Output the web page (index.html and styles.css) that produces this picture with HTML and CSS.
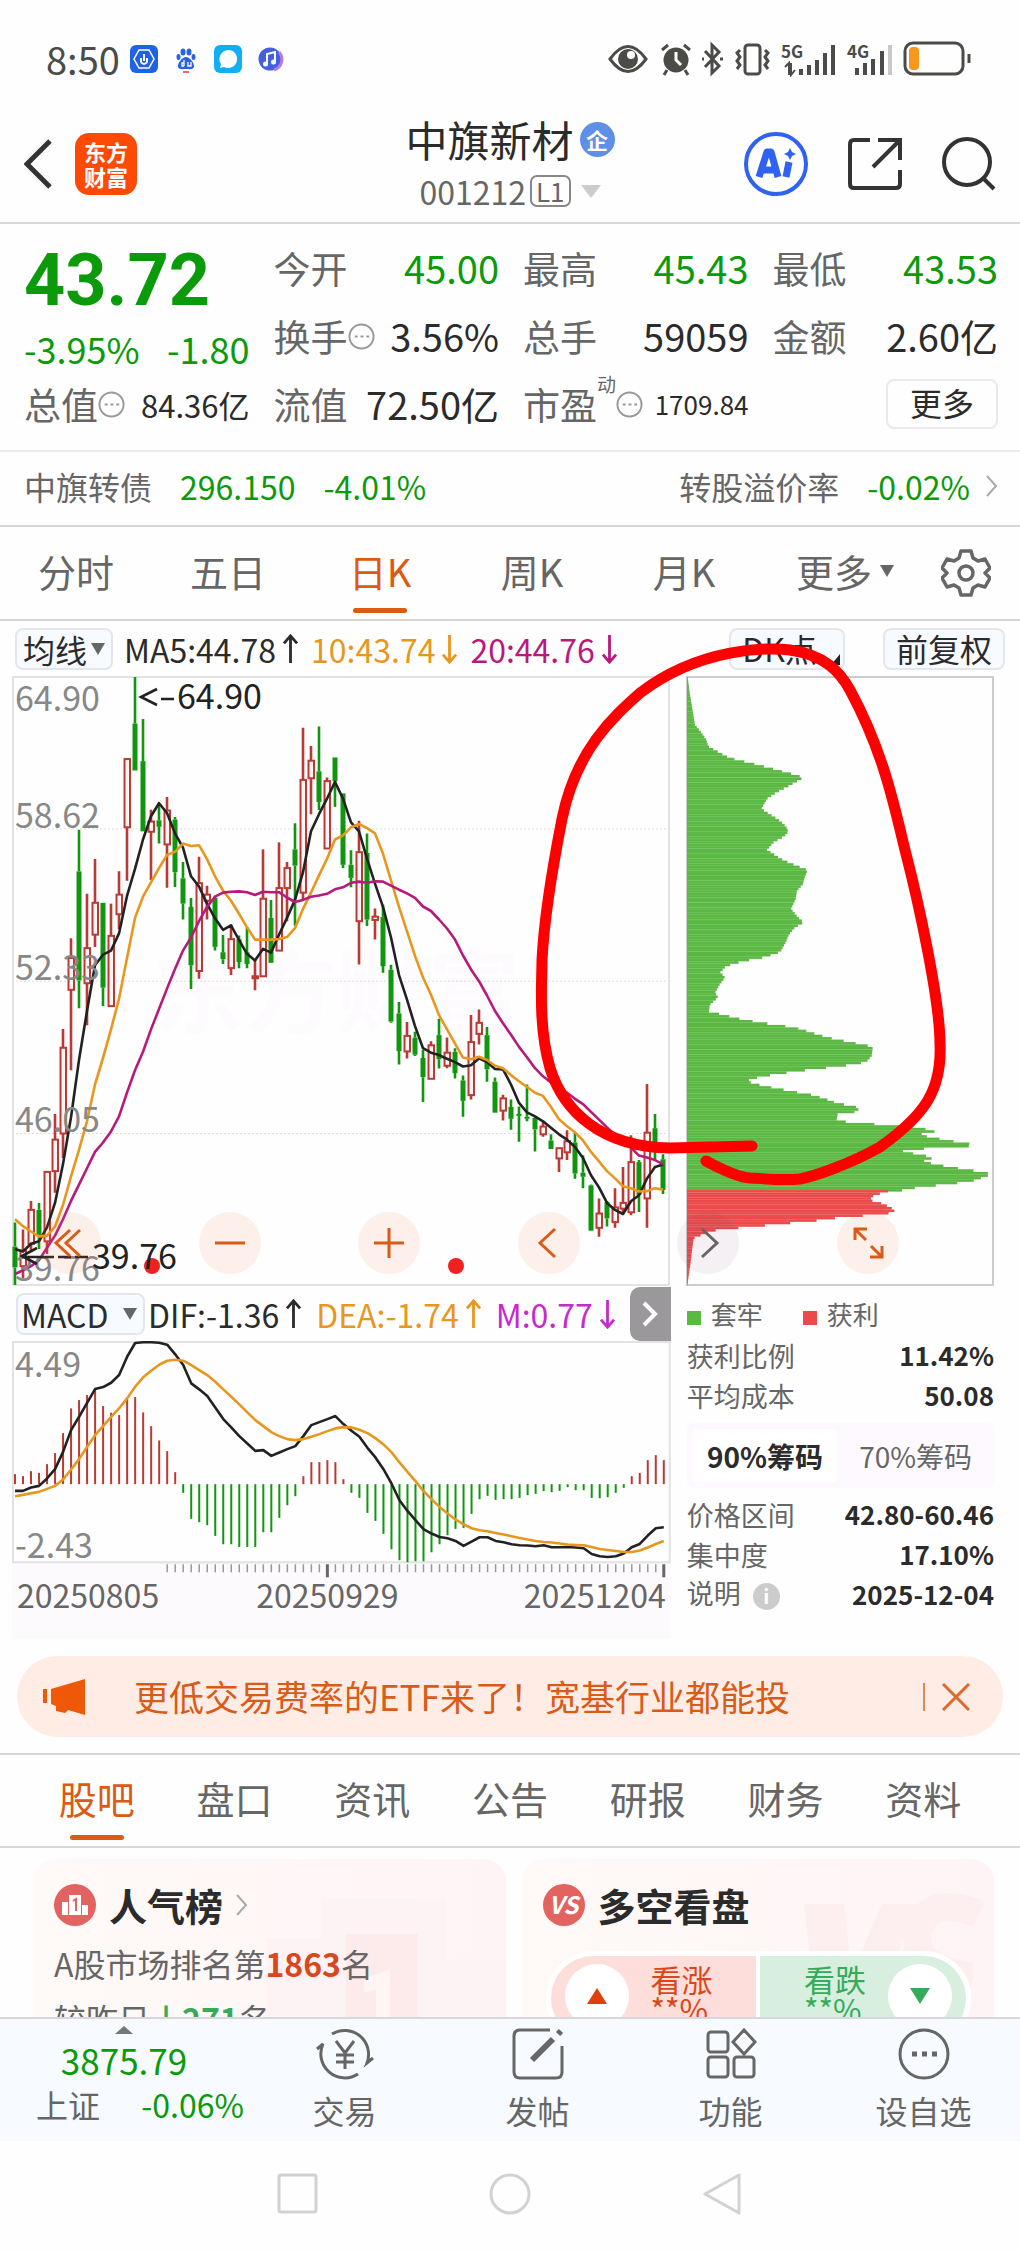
FILE: index.html
```html
<!DOCTYPE html>
<html lang="zh-CN">
<head>
    <meta charset="UTF-8">
    <meta name="viewport" content="width=device-width, initial-scale=1.0">
    <link rel="stylesheet" href="styles.css">
    <title>中旗新材 001212</title>
</head>
<body>
    <div class="status-bar">
        <span class="clock">8:50</span>
        <svg class="app-icon" viewBox="0 0 28 28"><rect width="28" height="28" rx="6" fill="#1f62e6"/><path d="M9 5h10l5 9-5 9H9l-5-9z" fill="none" stroke="#fff" stroke-width="1.5"/><path d="M11 13v4q3 4 6 0v-4M14 9v7" fill="none" stroke="#fff" stroke-width="2"/></svg>
        <svg class="app-icon" viewBox="0 0 28 28" fill="#2a62e0"><ellipse cx="11" cy="7" rx="2.500" ry="3.500"/><ellipse cx="17" cy="7" rx="2.500" ry="3.500"/><ellipse cx="6.500" cy="12" rx="2" ry="3"/><ellipse cx="21.500" cy="12" rx="2" ry="3"/><path d="M14 12c4 0 9 7 8 10-1 3-5 2-8 2s-7 1-8-2c-1-3 4-10 8-10z"/><path d="M12 15v6M12 18h-2v3h2M16 17v4h3v-4" fill="none" stroke="#fff" stroke-width="1.300"/><path d="M11 27h6" stroke="#e33" stroke-width="1.500"/></svg>
        <svg class="app-icon" viewBox="0 0 28 28"><rect width="28" height="28" rx="6" fill="#12aef5"/><path d="M14 5a9 9 0 1 1-4 17l-4 1 1-4a9 9 0 0 1 7-14z" fill="#fff"/></svg>
        <svg class="app-icon" viewBox="0 0 28 28"><circle cx="14" cy="14" r="11.500" fill="#4560dc"/><path d="M23 7a11 11 0 0 1-5 18" fill="none" stroke="#b77be8" stroke-width="3"/><path d="M11 19V9l8-2v10" fill="none" stroke="#fff" stroke-width="2"/><circle cx="9.500" cy="19" r="2.500" fill="#fff"/><circle cx="17.500" cy="17" r="2.500" fill="#fff"/></svg>
        <svg class="sys-icons" viewBox="0 0 364 36" fill="none" stroke="#4b4c48" stroke-width="3">
            <path d="M2 18Q20-7 38 18Q20 43 2 18z"/><circle cx="20" cy="18" r="10" fill="#4b4c48" stroke="none"/><circle cx="23" cy="14" r="4" fill="#fff" stroke="none"/>
            <circle cx="68" cy="19" r="12.500" fill="#4b4c48" stroke="none"/><path d="M54 9l6-5M82 9l-6-5M59 29l-3 5M77 29l3 5"/><path d="M68 11v8l5 5" stroke="#fff"/>
            <path d="M97 10l14 15-7 7V4l7 7-14 15M94 18h2M112 18h3"/>
            <rect x="137" y="4" width="15" height="29" rx="3"/><path d="M132 9l-3 3 3 4-3 4 3 4-3 4M157 9l3 3-3 4 3 4-3 4 3 4"/>
            <path d="M177 26l4-4v12M183 22v12l4-5" stroke-width="2"/>
            <path d="M193 28v6M201 24v10M209 19v15M217 12v22M225 4v30M249 27v7M257 22v12M265 18v16M274 10v24" stroke-width="4"/><path d="M282 4v30" stroke="#c9c9c9" stroke-width="4"/>
            <rect x="297" y="2" width="58" height="31" rx="8"/><rect x="301" y="6" width="10" height="23" rx="4" fill="#f9961e" stroke="none"/><path d="M361 13v9"/>
            <text x="173" y="17">5G</text><text x="239" y="17">4G</text>
        </svg>
    </div>

    <header class="header">
        <div class="header-left">
            <button class="icon-button" aria-label="返回"><svg width="28" height="50" viewBox="0 0 28 50"><path d="M26 2L3 25l23 23" fill="none" stroke="#333" stroke-width="5"/></svg></button>
            <a class="logo" href="#"><span>东方</span><span>财富</span></a>
        </div>
        <div class="stock-title">
            <h1>中旗新材<span class="badge">企</span></h1>
            <p class="code">001212<span class="level">L1</span><i class="triangle"></i></p>
        </div>
        <div class="header-right">
            <button class="icon-button" aria-label="Ai"><svg width="64" height="64" viewBox="0 0 64 64" fill="none" stroke="#2f62f0"><circle cx="32" cy="32" r="30" stroke-width="4"/><path d="M15 45l8-25h4l7 25M18 38h13" stroke-width="7" stroke-linejoin="round"/><path d="M45 30l-3 15" stroke-width="7"/><path d="M46 16l2 4 4 2-4 2-2 4-2-4-4-2 4-2z" fill="#2f62f0" stroke="none"/></svg></button>
            <button class="icon-button" aria-label="分享"><svg width="54" height="54" viewBox="0 0 54 54" fill="none" stroke="#333" stroke-width="4"><path d="M22 3H6Q2 3 2 7v40q0 4 4 4h42q4 0 4-4V33M30 3h22v20M51 4L25 30"/></svg></button>
            <button class="icon-button" aria-label="搜索"><svg width="54" height="54" viewBox="0 0 54 54" fill="none" stroke="#333" stroke-width="4"><circle cx="25" cy="25" r="23"/><path d="M41 41l11 11"/></svg></button>
        </div>
    </header>

    <section class="quote">
        <div class="price-box">
            <strong class="price">43.72</strong>
            <div class="change"><span>-3.95%</span><span>-1.80</span></div>
        </div>
        <div class="cell"><span>今开</span><b class="down">45.00</b></div>
        <div class="cell"><span>最高</span><b class="down">45.43</b></div>
        <div class="cell"><span>最低</span><b class="down">43.53</b></div>
        <div class="cell"><span>换手<svg class="dots" viewBox="0 0 28 28"><circle cx="14" cy="14" r="12.500"/><path d="M7 14h3M13 14h3M19 14h3"/></svg></span><b>3.56%</b></div>
        <div class="cell"><span>总手</span><b>59059</b></div>
        <div class="cell"><span>金额</span><b>2.60亿</b></div>
        <div class="cell"><span>总值<svg class="dots" viewBox="0 0 28 28"><circle cx="14" cy="14" r="12.500"/><path d="M7 14h3M13 14h3M19 14h3"/></svg></span><b class="mid">84.36亿</b></div>
        <div class="cell"><span>流值</span><b>72.50亿</b></div>
        <div class="cell"><span>市盈<sup>动</sup><svg class="dots" viewBox="0 0 28 28"><circle cx="14" cy="14" r="12.500"/><path d="M7 14h3M13 14h3M19 14h3"/></svg></span><b class="small">1709.84</b></div>
        <div class="cell cell-end"><button class="more">更多</button></div>
    </section>

    <a class="bond" href="#">
        <span>中旗转债</span><span class="down">296.150</span><span class="down">-4.01%</span>
        <span class="bond-rate">转股溢价率</span><span class="down">-0.02%</span>
        <svg width="12" height="24" viewBox="0 0 12 24"><path d="M1 2l9 10-9 10" fill="none" stroke="#aaa" stroke-width="2"/></svg>
    </a>

    <nav class="period-tabs">
        <a href="#">分时</a>
        <a href="#">五日</a>
        <a href="#" class="active">日K</a>
        <a href="#">周K</a>
        <a href="#">月K</a>
        <a href="#" class="tab-more">更多<i class="caret"></i></a>
        <button class="icon-button" aria-label="设置"><svg width="50" height="50" viewBox="0 0 50 50" fill="none" stroke="#666" stroke-width="3.500" stroke-linejoin="round"><path d="M20 3h10l2 7 5 3 7-2 5 9-5 5 0 0 5 5-5 9-7-2-5 3-2 7H20l-2-7-5-3-7 2-5-9 5-5-5-5 5-9 7 2 5-3z"/><circle cx="25" cy="25" r="7"/></svg></button>
    </nav>

    <main class="chart-area">
        <div class="toolbar">
            <label class="picker"><select aria-label="均线"><option>均线</option></select><i class="caret"></i></label>
            <div class="readings">
                <span>MA5:44.78<svg class="arrow" viewBox="0 0 18 32"><path d="M9 31V2M2 10l7-8 7 8"/></svg></span>
                <span class="orange">10:43.74<svg class="arrow" viewBox="0 0 18 32"><path d="M9 1v29M2 22l7 8 7-8"/></svg></span>
                <span class="magenta">20:44.76<svg class="arrow" viewBox="0 0 18 32"><path d="M9 1v29M2 22l7 8 7-8"/></svg></span>
            </div>
            <button class="chip-button dk">DK点</button>
            <button class="chip-button">前复权</button>
        </div>

        <div class="charts">
            <svg class="kline" id="kline" viewBox="0 0 658 610">
                <text class="watermark" x="140" y="350">东方财富</text>
            </svg>
            <svg class="chips" id="chips" viewBox="0 0 308 610"></svg>
            <div class="chart-buttons">
                <button aria-label="最早"><svg viewBox="0 0 62 62"><path d="M31 18L17 31l14 13M41 18L27 31l14 13"/></svg></button>
                <button aria-label="缩小"><svg viewBox="0 0 62 62"><path d="M16 31h30"/></svg></button>
                <button aria-label="放大"><svg viewBox="0 0 62 62"><path d="M16 31h30M31 16v30"/></svg></button>
                <button aria-label="左移"><svg viewBox="0 0 62 62"><path d="M37 17L22 31l15 14"/></svg></button>
                <button aria-label="右移" class="grey"><svg viewBox="0 0 62 62"><path d="M25 17l15 14-15 14"/></svg></button>
                <button aria-label="全屏"><svg viewBox="0 0 62 62"><path d="M18 28V17h12M18 17l11 11M45 34v11H33M45 45L34 34"/></svg></button>
            </div>
        </div>

        <div class="lower">
            <div class="macd-box">
                <div class="macd-head">
                    <label class="picker wide"><select aria-label="指标"><option>MACD</option></select><i class="caret"></i></label>
                    <span>DIF:-1.36<svg class="arrow" viewBox="0 0 18 32"><path d="M9 31V2M2 10l7-8 7 8"/></svg></span>
                    <span class="orange">DEA:-1.74<svg class="arrow" viewBox="0 0 18 32"><path d="M9 31V2M2 10l7-8 7 8"/></svg></span>
                    <span class="purple">M:0.77<svg class="arrow" viewBox="0 0 18 32"><path d="M9 1v29M2 22l7 8 7-8"/></svg></span>
                    <button class="next" aria-label="下一个"><svg width="16" height="26" viewBox="0 0 16 26"><path d="M2 2l11 11L2 24" fill="none" stroke="#fff" stroke-width="4"/></svg></button>
                </div>
                <svg class="macd" id="macd" viewBox="0 0 658 298"></svg>
            </div>
            <aside class="chip-info">
                <div class="legend"><span>套牢</span><span class="win">获利</span></div>
                <div class="info-row"><span>获利比例</span><b>11.42%</b></div>
                <div class="info-row"><span>平均成本</span><b>50.08</b></div>
                <div class="switch"><button class="on">90%筹码</button><button>70%筹码</button></div>
                <div class="info-row"><span>价格区间</span><b>42.80-60.46</b></div>
                <div class="info-row"><span>集中度</span><b>17.10%</b></div>
                <div class="info-row"><span>说明<i class="info">i</i></span><b>2025-12-04</b></div>
            </aside>
        </div>

        <!-- hand drawn mark over the chip chart -->
        <svg class="mark" viewBox="0 0 1020 600"><path d="M752 525L670 527C600 526 563 489 550 447C538 405 542 360 542 339C544 299 552 249 562 198C576 129 613 96 640 72C700 26 770 26 790 29C825 34 840 51 850 69C885 134 895 189 905 229C918 279 940 379 940 423C942 469 925 494 880 526C850 543 815 555 800 558C780 560 760 557 750 557C735 556 712 543 706 540"/></svg>
    </main>

    <div class="banner">
        <svg width="44" height="36" viewBox="0 0 44 36" fill="#ee5806"><path d="M0 10h4v14H0zM8 10L42 0v36l-17-5-3 3-9-2v-5l-5-2z"/></svg>
        <a href="#">更低交易费率的ETF来了！宽基行业都能投</a>
        <button class="close" aria-label="关闭"><svg width="28" height="28" viewBox="0 0 28 28"><path d="M1 1l26 26M27 1L1 27" fill="none" stroke="#dd6a2c" stroke-width="3"/></svg></button>
    </div>

    <nav class="info-tabs">
        <a href="#" class="active">股吧</a>
        <a href="#">盘口</a>
        <a href="#">资讯</a>
        <a href="#">公告</a>
        <a href="#">研报</a>
        <a href="#">财务</a>
        <a href="#">资料</a>
    </nav>

    <section class="cards">
        <article class="card">
            <svg class="card-bg" viewBox="0 0 240 180"><path d="M0 60h55V20h125v60h60v100H0z" fill="#fef3f4"/><path d="M80 55h72v125H80z" fill="#fdeaea"/><path d="M98 100l26-10v70h-14v-50l-12 4z" fill="#fff6f3"/></svg>
            <h2><svg width="42" height="42" viewBox="0 0 42 42"><circle cx="21" cy="21" r="21" fill="#e2635f"/><path d="M8 18h6v13H8zM15 11h12v20H15zM28 21h6v10h-6z" fill="#fff"/><path d="M19 17l3-2v12" fill="none" stroke="#e2635f" stroke-width="2"/></svg>人气榜<svg width="12" height="22" viewBox="0 0 12 22"><path d="M1 1l9 10-9 10" fill="none" stroke="#aaa" stroke-width="2"/></svg></h2>
            <p>A股市场排名第<b class="rank">1863</b>名</p>
            <p>较昨日<b class="green">↓271</b>名</p>
        </article>
        <article class="card">
            <svg class="card-bg" viewBox="0 0 240 180"><path d="M50 25h40l8 70 30-70h35l-50 130H65z" fill="#fdeef0"/><path d="M225 35q-50-20-60 15t40 45q0 30-55 25" fill="none" stroke="#fdeef0" stroke-width="28"/></svg>
            <h2><span class="vs">VS</span>多空看盘</h2>
            <div class="vote">
                <button class="vote-up"><i><svg width="22" height="18" viewBox="0 0 22 18"><path d="M11 1l10 16H1z" fill="#e23f0c"/></svg></i><span>看涨<br>**%</span></button>
                <button class="vote-down"><span>看跌<br>**%</span><i><svg width="22" height="18" viewBox="0 0 22 18"><path d="M11 17L1 1h20z" fill="#36ab5c"/></svg></i></button>
            </div>
        </article>
    </section>

    <footer class="bottom-bar">
        <a class="index" href="#">
            <i class="up"></i>
            <strong>3875.79</strong>
            <span><em>上证</em>-0.06%</span>
        </a>
        <a class="action" href="#"><svg viewBox="0 0 60 52"><path d="M17 6A24 24 0 0 1 52 35l6-5M43 46A24 24 0 0 1 8 16l-6 5M21 13l9 12 9-12M30 25v16M21 27h18M21 34h18"/></svg>交易</a>
        <a class="action" href="#"><svg viewBox="0 0 60 52"><path d="M42 2H12Q6 2 6 8v36q0 6 6 6h36q6 0 6-6V18"/><path d="M24 32L45 11" stroke-width="6"/><path d="M50 6l3-3" stroke-width="6"/></svg>发帖</a>
        <a class="action" href="#"><svg viewBox="0 0 60 52"><rect x="7" y="4" width="20" height="20" rx="3"/><path d="M43 2l11 12-11 12-11-12z"/><rect x="7" y="29" width="20" height="20" rx="3"/><rect x="33" y="29" width="20" height="20" rx="3"/></svg>功能</a>
        <a class="action" href="#"><svg viewBox="0 0 60 52"><circle cx="30" cy="26" r="24"/><path d="M18 26h5M28 26h5M38 26h5" stroke-width="5"/></svg>设自选</a>
    </footer>

    <div class="system-nav">
        <button aria-label="任务"><svg viewBox="0 0 42 42"><rect x="2" y="2" width="37" height="37" rx="2"/></svg></button>
        <button aria-label="主页"><svg viewBox="0 0 42 42"><circle cx="21" cy="21" r="19"/></svg></button>
        <button aria-label="返回"><svg viewBox="0 0 42 42"><path d="M38 2v38L4 21z"/></svg></button>
    </div>

    <script src="charts.js"></script>
</body>
</html>
```

FILE: styles.css
```css
* {
    box-sizing: border-box;
}

body {
    margin: 0;
    background-color: #fefefe;
    color: #2b2b2b;
    font-family: "Noto Sans CJK SC", "Noto Sans", sans-serif;
    font-size: 32px;
    line-height: 1;
}

h1, h2, p {
    margin: 0;
    font-weight: 400;
}

i, em {
    font-style: normal;
}

a {
    color: inherit;
    text-decoration: none;
}

button, select {
    font: inherit;
    color: inherit;
    border: 0;
    padding: 0;
    margin: 0;
    background: none;
    cursor: pointer;
}

svg {
    display: block;
    flex-shrink: 0;
}

.down {
    color: #0a9a0a;
}

.orange {
    color: #e8971e;
}

.magenta {
    color: #b81a7c;
}

.purple {
    color: #c529cf;
}

/* status bar */
.status-bar {
    display: flex;
    align-items: center;
    height: 106px;
    padding: 12px 48px 0 46px;
    color: #4b4c48;
}

.clock {
    font-size: 38px;
    margin-right: 10px;
}

.app-icon {
    width: 28px;
    margin-right: 14px;
}

.sys-icons {
    width: 364px;
    margin-left: auto;
}

.sys-icons text {
    font-size: 17px;
    font-weight: 700;
    fill: #4b4c48;
    stroke: none;
}

/* header */
.header {
    display: grid;
    grid-template-columns: 1fr auto 1fr;
    align-items: center;
    height: 118px;
    padding: 0 24px;
    border-bottom: 2px solid #d8d8d8;
}

.header-left, .header-right {
    display: flex;
    align-items: center;
    gap: 23px;
}

.header-right {
    justify-content: flex-end;
    gap: 40px;
}

.logo {
    display: flex;
    flex-direction: column;
    align-items: center;
    justify-content: center;
    width: 62px;
    height: 62px;
    border-radius: 14px;
    background-color: #ff4a05;
    color: #fff;
    font-size: 22px;
    font-weight: 700;
    line-height: 25px;
}

.stock-title h1 {
    display: flex;
    align-items: center;
    gap: 6px;
    font-size: 42px;
    line-height: 50px;
}

.badge {
    width: 35px;
    height: 35px;
    border-radius: 50%;
    background-color: #5f8fe6;
    color: #fff;
    font-size: 22px;
    font-weight: 700;
    line-height: 34px;
    text-align: center;
}

.code {
    display: flex;
    align-items: center;
    justify-content: center;
    margin-top: 4px;
    color: #666;
    line-height: 46px;
}

.level {
    border: 2px solid #888;
    border-radius: 7px;
    padding: 0 4px;
    margin: 0 10px 0 4px;
    font-size: 26px;
    line-height: 28px;
}

.triangle {
    border: 10px solid transparent;
    border-top: 13px solid #ccc;
    border-bottom: 0;
}

/* quote */
.quote {
    display: grid;
    grid-template-columns: repeat(4, 1fr);
    grid-auto-rows: 68px;
    column-gap: 24px;
    padding: 10px 22px 12px 24px;
    border-bottom: 2px solid #ececec;
}

.price-box {
    grid-row: span 2;
    color: #0a9a0a;
}

.price {
    display: block;
    font-family: Roboto, sans-serif;
    font-size: 72px;
    line-height: 94px;
}

.change {
    display: flex;
    justify-content: space-between;
    font-size: 36px;
    line-height: 40px;
}

.cell {
    display: flex;
    align-items: center;
    justify-content: space-between;
    white-space: nowrap;
}

.cell span {
    display: flex;
    align-items: center;
    font-size: 37px;
    color: #666;
}

.cell b {
    font-size: 38px;
    font-weight: 400;
}

.cell .mid {
    font-size: 31px;
}

.cell .small {
    font-size: 26px;
}

.cell sup {
    align-self: flex-start;
    margin-top: -12px;
    font-size: 19px;
}

.dots {
    width: 27px;
    height: 27px;
    fill: none;
    stroke: #999;
    stroke-width: 2;
}

.cell-end {
    justify-content: flex-end;
}

.more {
    width: 112px;
    height: 50px;
    padding-bottom: 4px;
    border: 2px solid #ece8ea;
    border-radius: 8px;
}

.bond {
    display: flex;
    align-items: center;
    gap: 28px;
    height: 75px;
    padding: 0 22px 5px 24px;
    border-bottom: 2px solid #d8d8d8;
    color: #666;
}

.bond-rate {
    margin-left: auto;
}

.bond svg {
    margin-left: -12px;
}

/* tabs */
.period-tabs {
    display: grid;
    grid-template-columns: repeat(6, 1fr) 108px;
    height: 94px;
    border-bottom: 2px solid #d8d8d8;
}

.period-tabs a, .info-tabs a {
    position: relative;
    display: flex;
    align-items: center;
    justify-content: center;
    padding-bottom: 5px;
    font-size: 38px;
    color: #666;
}

.period-tabs .tab-more {
    padding-left: 18px;
}

.period-tabs .active, .info-tabs .active {
    color: #dc5a12;
}

.active::after {
    content: "";
    position: absolute;
    bottom: 6px;
    width: 54px;
    height: 5px;
    border-radius: 3px;
    background-color: #dc5a12;
}

.period-tabs .icon-button {
    display: flex;
    align-items: center;
    justify-content: center;
}

.caret {
    border: 7px solid transparent;
    border-top: 12px solid #666;
    border-bottom: 0;
    margin-left: 8px;
}

/* charts */
.chart-area {
    position: relative;
}

.toolbar {
    display: flex;
    align-items: center;
    height: 55px;
    padding: 0 15px;
}

.picker {
    display: flex;
    align-items: center;
    height: 42px;
    padding: 0 6px;
    border: 2px solid #e4e6ee;
    border-radius: 8px;
    background-color: #f7faff;
}

.picker select {
    appearance: none;
    line-height: 38px;
}

.picker .caret {
    margin-left: 3px;
}

.readings {
    display: flex;
    gap: 12px;
    margin-left: 11px;
    flex: 1;
}

.readings span, .macd-head span {
    display: flex;
    align-items: center;
    gap: 6px;
    white-space: nowrap;
}

.arrow {
    width: 17px;
    height: 30px;
    fill: none;
    stroke: currentColor;
    stroke-width: 3;
}

.chip-button {
    height: 42px;
    padding: 0 11px 2px;
    border: 2px solid #e4e6ee;
    border-radius: 8px;
    background-color: #f7faff;
}

.dk {
    position: relative;
    padding-right: 26px;
    margin-right: 38px;
}

.dk::after {
    content: "";
    position: absolute;
    right: 3px;
    bottom: 3px;
    border-left: 9px solid transparent;
    border-bottom: 11px solid #222;
}

.charts {
    position: relative;
    display: grid;
    grid-template-columns: 658fr 308fr;
    gap: 16px;
    padding: 0 26px 0 12px;
}

.charts svg {
    width: 100%;
}

.kline text, .macd text {
    font-size: 34px;
    fill: #888;
}

.kline .tag {
    fill: #222;
}

.kline .watermark {
    font-size: 92px;
    font-weight: 700;
    fill: #fefbfe;
}

.macd .date {
    font-size: 32px;
    fill: #666;
}

.chart-buttons {
    position: absolute;
    left: 39px;
    right: 121px;
    bottom: 12px;
    display: flex;
    justify-content: space-between;
}

.chart-buttons button {
    width: 62px;
    height: 62px;
    border-radius: 50%;
    background-color: rgba(250, 120, 70, 0.1);
}

.chart-buttons path {
    fill: none;
    stroke: #d95b18;
    stroke-width: 3;
}

.chart-buttons .grey {
    background-color: rgba(120, 60, 120, 0.07);
}

.chart-buttons .grey path {
    stroke: #666;
}

.lower {
    display: grid;
    grid-template-columns: 658fr 308fr;
    gap: 16px;
    padding: 0 26px 0 12px;
}

.macd-head {
    display: flex;
    align-items: center;
    gap: 14px;
    height: 55px;
    padding-left: 4px;
}

.macd-head .wide {
    padding: 0 6px 0 3px;
    margin-right: -11px;
}

.wide .caret {
    margin-left: 14px;
}

.next {
    display: flex;
    align-items: center;
    justify-content: center;
    width: 41px;
    height: 54px;
    margin-left: auto;
    border-radius: 10px 0 0 10px;
    background-color: #9b989b;
}

.macd {
    width: 100%;
}

.chip-info {
    padding-top: 7px;
    font-size: 27px;
    color: #666;
}

.legend {
    display: flex;
    gap: 40px;
    height: 42px;
    align-items: center;
    font-size: 26px;
}

.legend span::before {
    content: "";
    display: inline-block;
    width: 14px;
    height: 14px;
    margin-right: 10px;
    background-color: #5bb943;
}

.legend .win::before {
    background-color: #ea4a4a;
}

.info-row {
    display: flex;
    align-items: center;
    justify-content: space-between;
    height: 40px;
}

.info-row b {
    color: #2b2b2b;
    font-size: 26px;
}

.info {
    display: inline-block;
    width: 27px;
    height: 27px;
    margin-left: 12px;
    border-radius: 50%;
    background-color: #ccc;
    color: #fff;
    font-size: 20px;
    font-weight: 700;
    line-height: 26px;
    text-align: center;
}

.switch {
    display: grid;
    grid-template-columns: 1fr 1fr;
    gap: 6px;
    height: 65px;
    margin: 8px 0 6px;
    padding: 6px;
    border-radius: 6px;
    background-color: #fdf9fe;
    font-size: 28px;
}

.switch .on {
    border-radius: 4px;
    background-color: #fff;
    color: #2b2b2b;
    font-weight: 700;
}

.mark {
    position: absolute;
    left: 0;
    top: 0;
    width: 100%;
    pointer-events: none;
}

.mark path {
    fill: none;
    stroke: #fe0000;
    stroke-width: 11;
    stroke-linecap: round;
    stroke-linejoin: round;
}

/* banner */
.banner {
    display: flex;
    align-items: center;
    height: 81px;
    margin: 17px 17px 16px;
    padding: 0 33px 0 26px;
    border-radius: 41px;
    background-color: #ffede5;
    color: #d95b18;
    font-size: 35px;
}

.banner a {
    flex: 1;
    margin-left: 47px;
    padding-bottom: 3px;
}

.close {
    padding-left: 17px;
    border-left: 2px solid #dd8a5c;
}

.info-tabs {
    display: grid;
    grid-template-columns: repeat(7, 1fr);
    height: 95px;
    padding: 0 28px;
    border-top: 2px solid #d8d8d8;
    border-bottom: 2px solid #d8d8d8;
}

/* cards */
.cards {
    display: grid;
    grid-template-columns: 1fr 1fr;
    gap: 16px;
    height: 169px;
    padding: 11px 26px 0 33px;
    overflow: hidden;
}

.card {
    position: relative;
    height: 240px;
    padding: 22px 21px;
    border-radius: 22px;
    overflow: hidden;
    background: linear-gradient(90deg, #fefaf7, #fef4f6);
    color: #666;
}

.card-bg {
    position: absolute;
    right: 0;
    top: 20px;
    width: 240px;
}

.card h2 {
    position: relative;
    display: flex;
    align-items: center;
    gap: 13px;
    font-size: 38px;
    font-weight: 700;
    line-height: 48px;
    color: #2b2b2b;
}

.card p {
    position: relative;
    margin-top: 13px;
    line-height: 42px;
}

.card .rank {
    color: #d9481c;
}

.card .green {
    color: #36ab5c;
}

.vs {
    width: 42px;
    height: 42px;
    border-radius: 50%;
    background-color: #e2635f;
    color: #fff;
    font-size: 24px;
    font-style: italic;
    line-height: 40px;
    text-align: center;
}

.vote {
    position: relative;
    display: grid;
    grid-template-columns: 1fr 1fr;
    gap: 4px;
    margin: 22px 2px 0 3px;
    border: 5px solid #fff;
    border-radius: 50px;
    overflow: hidden;
    background-color: #fff;
}

.vote button {
    display: flex;
    align-items: flex-start;
    height: 84px;
    gap: 22px;
    padding: 8px 14px;
    font-size: 31px;
    line-height: 30px;
    text-align: left;
}

.vote i {
    display: flex;
    align-items: center;
    justify-content: center;
    width: 64px;
    height: 64px;
    border-radius: 50%;
    background-color: #fff;
}

.vote .vote-up {
    background-color: #fddedb;
    color: #d9481c;
}

.vote .vote-down {
    justify-content: flex-end;
    background-color: #d8efdf;
    color: #36ab5c;
}

/* bottom */
.bottom-bar {
    display: grid;
    grid-template-columns: 248fr 193fr 193fr 193fr 193fr;
    height: 124px;
    border-top: 2px solid #d8d8dc;
    background-color: #f7faff;
}

.index {
    display: flex;
    flex-direction: column;
    align-items: center;
    padding-top: 7px;
    padding-left: 36px;
    color: #0a9a0a;
}

.index .up {
    border: 9px solid transparent;
    border-bottom: 8px solid #777;
    border-top: 0;
    margin-right: 36px;
}

.index strong {
    font-size: 35px;
    font-weight: 400;
    line-height: 52px;
    margin-right: 36px;
}

.index span {
    display: flex;
    justify-content: space-between;
    width: 100%;
    padding-right: 4px;
    line-height: 36px;
}

.index em {
    color: #666;
}

.action {
    display: flex;
    flex-direction: column;
    align-items: center;
    gap: 14px;
    padding-top: 9px;
    color: #666;
}

.action svg {
    width: 60px;
    height: 52px;
    fill: none;
    stroke: #666;
    stroke-width: 3;
}

.system-nav {
    display: flex;
    justify-content: center;
    gap: 170px;
    padding: 32px 0;
}

.system-nav svg {
    width: 42px;
    height: 42px;
    fill: none;
    stroke: #d3d1d3;
    stroke-width: 3;
    stroke-linejoin: round;
}
```

FILE: charts.js
```js
const NS = 'http://www.w3.org/2000/svg';
const RED = '#b93a36';
const GREEN = '#11960f';

// high, body top, body bottom, low (depth from the top of the plot); 1 = rise, 0 = fall
const candles = [
    [0,1378,1437,1488,1531],[1,1395,1447,1485,1515],[1,1325,1347,1430,1450],[0,1330,1347,1410,1443],
    [1,1254,1254,1424,1455],[1,1112,1175,1252,1305],[1,904,950,1160,1220],[1,682,730,808,1005],
    [0,416,518,785,853],[1,573,706,792,895],[1,488,595,673,703],[0,595,595,803,848],
    [1,597,676,848,848],[1,518,575,623,660],[1,241,243,410,541],[0,42,156,271,271],
    [0,145,248,420,420],[1,367,396,421,539],[0,352,393,409,450],[1,336,369,452,558],
    [0,385,391,520,556],[0,495,535,597,636],[0,583,605,748,806],[1,482,547,762,781],
    [1,553,575,590,636],[0,578,583,703,712],[0,674,716,733,745],[1,648,684,755,772],
    [0,675,684,740,755],[0,655,716,745,755],[1,735,775,777,809],[1,464,585,775,775],
    [0,588,632,742,742],[1,447,559,712,712],[1,495,510,559,640],[0,400,464,504,651],
    [1,166,294,570,590],[1,211,247,290,378],[0,163,273,348,368],[1,288,297,462,462],
    [0,239,239,297,360],[0,327,327,502,510],[0,466,502,534,557],[1,394,471,640,746],
    [0,425,473,636,652],[1,609,629,637,685],[0,600,630,750,766],[0,747,759,886,889],
    [0,838,866,958,991],[1,887,921,959,976],[0,911,925,967,970],[0,955,975,1022,1083],
    [1,934,944,1026,1026],[0,879,919,978,1001],[1,925,962,994,1000],[0,951,960,1012,1025],
    [0,1018,1030,1080,1119],[1,870,936,1066,1077],[1,856,889,916,942],[0,899,919,1003,1033],
    [0,1023,1033,1109,1109],[1,1065,1074,1104,1128],[0,1077,1095,1124,1151],[0,1094,1112,1115,1180],
    [0,1040,1119,1124,1130],[0,1120,1122,1150,1204],[1,1130,1143,1162,1168],[0,1162,1177,1198,1198],
    [1,1195,1196,1221,1254],[1,1152,1179,1206,1225],[0,1158,1182,1258,1271],[0,1213,1256,1266,1294],
    [0,1285,1287,1398,1398],[1,1319,1356,1391,1413],[0,1325,1328,1368,1388],[1,1294,1341,1377,1391],
    [1,1242,1330,1344,1355],[1,1164,1230,1353,1360],[0,1225,1230,1310,1352],[1,1039,1158,1319,1391],
    [0,1112,1147,1195,1225],[0,1211,1223,1298,1308]
];

const ma5 = [1443,1449,1430,1424,1390,1330,1235,1120,980,860,748,722,712,670,578,512,440,383,351,375,425,460,530,555,597,633,661,650,686,720,736,708,717,673,632,588,520,420,378,340,299,340,398,420,487,548,605,680,772,832,897,951,962,968,977,985,996,993,976,985,1002,1003,1040,1085,1108,1118,1130,1146,1162,1175,1193,1220,1262,1292,1330,1347,1357,1326,1311,1270,1242,1236];
const ma10 = [1370,1387,1400,1412,1410,1388,1335,1265,1200,1130,1040,975,905,830,730,632,580,545,510,478,470,450,456,454,488,530,565,590,622,655,685,685,685,684,679,657,610,570,528,487,440,430,410,402,412,425,475,540,605,665,725,778,820,870,905,940,974,978,972,980,994,1000,1017,1032,1046,1060,1068,1095,1125,1142,1157,1177,1205,1228,1252,1270,1289,1294,1302,1301,1294,1297];
const ma20 = [1504,1495,1485,1470,1440,1410,1370,1325,1285,1245,1205,1182,1155,1118,1060,1005,960,905,855,805,757,712,680,640,605,580,570,568,567,569,576,568,569,569,582,593,588,580,577,573,562,557,546,543,546,542,543,553,563,572,583,604,615,636,658,685,724,758,787,822,860,890,918,948,973,1000,1020,1035,1048,1060,1075,1088,1107,1126,1145,1163,1180,1195,1214,1219,1225,1235];

const bars = [612,618,603,608,582,549,489,415,390,375,360,408,428,435,387,381,427,468,511,543,606,668,746,756,765,797,822,822,830,830,830,786,786,743,705,678,618,576,576,570,576,627,668,683,728,752,791,837,870,876,873,873,846,822,795,776,773,731,687,677,689,687,687,683,675,671,663,666,662,651,660,660,683,684,681,668,653,618,608,570,555,570];
const dif = [662,662,652,647,625,597,545,480,440,398,357,351,338,315,260,219,217,217,218,224,253,285,340,358,378,412,447,472,498,520,542,540,557,547,537,528,498,465,456,447,438,462,482,500,533,562,597,640,690,722,750,777,790,800,804,812,827,814,801,801,812,816,822,825,826,828,825,831,831,830,832,834,851,858,860,858,850,831,821,796,774,771];
const dea = [678,674,669,665,656,647,628,598,567,530,495,468,440,415,385,350,322,302,284,272,269,272,285,300,315,335,358,380,403,427,450,468,486,498,507,510,507,500,492,483,475,471,472,479,489,504,523,546,577,605,633,663,687,710,730,748,762,774,780,783,788,793,798,803,808,812,815,817,820,823,824,825,830,836,839,842,845,845,841,832,821,812];

// depth, width
const trapped = [[42,2],[80,8],[120,16],[160,24],[175,40],[195,57],[212,64],[225,92],[240,127],[247,162],[258,217],[270,272],[280,317],[288,351],[295,334],[310,302],[325,267],[340,240],[365,223],[380,252],[395,280],[408,297],[420,304],[432,292],[445,262],[465,240],[480,267],[492,292],[505,332],[515,362],[530,354],[550,347],[565,330],[585,326],[610,312],[630,332],[643,350],[655,324],[672,306],[690,297],[715,280],[728,232],[738,167],[750,117],[765,100],[778,114],[795,98],[815,84],[826,93],[845,68],[862,66],[868,102],[880,162],[890,232],[900,322],[910,362],[925,422],[935,482],[945,542],[950,557],[970,554],[985,537],[995,462],[1003,372],[1015,262],[1025,197],[1032,178],[1042,222],[1055,302],[1065,372],[1075,415],[1085,447],[1095,507],[1105,519],[1113,452],[1125,449],[1130,462],[1137,562],[1142,622],[1147,702],[1154,749],[1161,704],[1168,722],[1175,772],[1183,827],[1189,887],[1195,762],[1200,634],[1207,667],[1213,702],[1219,748],[1225,705],[1233,732],[1241,782],[1252,867],[1259,917],[1266,892],[1276,857],[1283,792],[1290,712],[1297,645]];
const winning = [[1298,615],[1306,582],[1315,552],[1324,552],[1332,587],[1340,607],[1347,624],[1354,617],[1360,542],[1366,452],[1372,402],[1378,322],[1384,247],[1390,167],[1396,90],[1404,57],[1410,37],[1416,20],[1440,16],[1480,10],[1531,1]];

function add(parent, name, attrs, text) {
    const node = document.createElementNS(NS, name);
    for (const key in attrs) node.setAttribute(key, attrs[key]);
    if (text) node.textContent = text;
    parent.appendChild(node);
    return node;
}

function line(svg, values, y, color) {
    const points = values.map((v, i) => x(i) + ',' + y(v).toFixed(1)).join(' ');
    add(svg, 'polyline', { points, fill: 'none', stroke: color, 'stroke-width': 2.6, 'stroke-linejoin': 'round' });
}

const x = i => 3 + i * 8;
const yPrice = v => 1 + (v - 42) * 608 / 1489;
const yMacd = v => 1 + (v - 216) / 3;

function drawKline() {
    const svg = document.getElementById('kline');
    add(svg, 'rect', { x: 1, y: 1, width: 656, height: 608, fill: 'none', stroke: '#e2e2e2', 'stroke-width': 2 });
    [414, 787, 1160].forEach(v => {
        add(svg, 'path', { d: `M0 ${yPrice(v)}H658`, stroke: '#ddd', 'stroke-dasharray': '2 2' });
    });
    candles.forEach(([up, high, top, bottom, low], i) => {
        const color = up ? RED : GREEN;
        const h = Math.max(yPrice(bottom) - yPrice(top), 2);
        add(svg, 'path', { d: `M${x(i)} ${yPrice(high)}V${yPrice(top)}M${x(i)} ${yPrice(bottom)}V${yPrice(low)}`, stroke: color, 'stroke-width': 2.6 });
        if (up) {
            add(svg, 'rect', { x: x(i) - 2.5, y: yPrice(top), width: 5.5, height: h, fill: '#fff4f2', stroke: color, 'stroke-width': 2 });
        } else {
            add(svg, 'rect', { x: x(i) - 2.5, y: yPrice(top), width: 5, height: h, fill: color });
        }
    });
    line(svg, ma5, yPrice, '#222');
    line(svg, ma10, yPrice, '#e8971e');
    line(svg, ma20, yPrice, '#b81a7c');
    [['64.90', 35], ['58.62', 152], ['52.33', 304], ['46.05', 456], ['39.76', 605]].forEach(([t, y]) => {
        add(svg, 'text', { x: 3, y }, t);
    });
    add(svg, 'text', { x: 165, y: 33, class: 'tag' }, '64.90');
    add(svg, 'path', { d: 'M145 13L129 21L145 29M149 23H162M25 572L10 580L25 588M10 581H42M46 581H59M63 581H76', fill: 'none', stroke: '#222', 'stroke-width': 2.6 });
    add(svg, 'circle', { cx: 140, cy: 590, r: 8, fill: '#f02020' });
    add(svg, 'text', { x: 80, y: 593, class: 'tag' }, '39.76');
    add(svg, 'circle', { cx: 444, cy: 590, r: 8, fill: '#f02020' });
}

function widthAt(points, v) {
    for (let i = 1; i < points.length; i++) {
        const [y0, w0] = points[i - 1];
        const [y1, w1] = points[i];
        if (v <= y1) return w0 + (w1 - w0) * (v - y0) / (y1 - y0);
    }
    return 0;
}

function drawChips() {
    const svg = document.getElementById('chips');
    add(svg, 'rect', { x: 1, y: 1, width: 306, height: 608, fill: 'none', stroke: '#ccc', 'stroke-width': 2 });
    [[trapped, '#5bb943', '#6cc156'], [winning, '#ea4a4a', '#ee6262']].forEach(([points, color, light]) => {
        const end = points[points.length - 1][0];
        let row = 0;
        for (let v = points[0][0]; v < end; v += 6) {
            const w = widthAt(points, Math.min(v + 3, end)) / 3;
            add(svg, 'rect', { x: 1, y: yPrice(v), width: w, height: 2.6, fill: color });
            if (row++ % 3 === 0) add(svg, 'rect', { x: 1, y: yPrice(v), width: w, height: 0.6, fill: light });
        }
    });
}

function drawMacd() {
    const svg = document.getElementById('macd');
    add(svg, 'rect', { x: 0, y: 221, width: 658, height: 77, fill: '#fdfafd' });
    add(svg, 'rect', { x: 1, y: 1, width: 656, height: 220, fill: 'none', stroke: '#e2e2e2', 'stroke-width': 2 });
    bars.forEach((v, i) => {
        add(svg, 'path', { d: `M${x(i)} ${yMacd(642)}V${yMacd(v)}`, stroke: v < 642 ? RED : GREEN, 'stroke-width': 2 });
        const major = i === 39 || i === 81;
        if (i > 18) add(svg, 'path', { d: `M${x(i)} 223v${major ? 13 : 8}`, stroke: major ? '#666' : '#999', 'stroke-width': major ? 3 : 1.5 });
    });
    line(svg, dif, yMacd, '#222');
    line(svg, dea, yMacd, '#e8971e');
    add(svg, 'text', { x: 3, y: 36 }, '4.49');
    add(svg, 'text', { x: 3, y: 217 }, '-2.43');
    add(svg, 'text', { x: 5, y: 267, class: 'date' }, '20250805');
    add(svg, 'text', { x: x(39), y: 267, class: 'date', 'text-anchor': 'middle' }, '20250929');
    add(svg, 'text', { x: 653, y: 267, class: 'date', 'text-anchor': 'end' }, '20251204');
}

drawKline();
drawChips();
drawMacd();
```
